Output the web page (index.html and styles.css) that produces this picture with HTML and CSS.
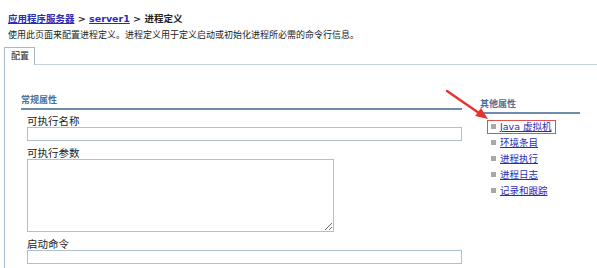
FILE: index.html
```html
<!DOCTYPE html>
<html lang="zh">
<head>
  <meta charset="UTF-8" />
  <title>进程定义</title>
  <link rel="stylesheet" href="styles.css">
</head>
<body>

  <div class="breadcrumb">
    <a href="#">应用程序服务器</a> &gt; <a href="#">server1</a> &gt; 进程定义
  </div>
  <div class="desc">使用此页面来配置进程定义。进程定义用于定义启动或初始化进程所必需的命令行信息。</div>

  <div class="tabs">
    <div class="tab">配置</div>
    <div class="tab-rest"></div>
  </div>

  <div class="panel">
    <div class="general">
      <h3 class="section-title">常规属性</h3>
      <div class="field">
        <label>可执行名称</label>
        <input type="text" class="text-input">
      </div>
      <div class="field">
        <label>可执行参数</label>
        <textarea class="text-area"></textarea>
      </div>
      <div class="field">
        <label>启动命令</label>
        <input type="text" class="text-input">
      </div>
    </div>

    <div class="other">
      <h3 class="section-title other-title">其他属性</h3>
      <ul class="links">
        <li class="highlight"><a href="#">Java 虚拟机</a></li>
        <li><a href="#">环境条目</a></li>
        <li><a href="#">进程执行</a></li>
        <li><a href="#">进程日志</a></li>
        <li><a href="#">记录和跟踪</a></li>
      </ul>
    </div>
  </div>

  <!-- red pointer arrow drawn over the page -->
  <svg class="arrow" width="52" height="38" viewBox="0 0 52 38">
    <path d="M7 5 L39 27" stroke="#e8322f" stroke-width="2.4" stroke-linecap="round" fill="none"/>
    <polygon points="48,33 35.2,30 41,22" fill="#e8322f"/>
  </svg>

</body>
</html>
```

FILE: styles.css
```css
body {
  position: relative;
  margin: 0;
  font-family: "DejaVu Sans", "Noto Sans CJK SC", sans-serif;
  font-size: 11px;
  color: #222;
  background: #fff;
  overflow: hidden;
}

a {
  color: #2b2bb8;
}

.breadcrumb {
  padding: 12px 0 0 8px;
  font-size: 9.5px;
  font-weight: bold;
  line-height: 14px;
  color: #222;
}

.breadcrumb a {
  color: #2b2bb8;
}

.desc {
  padding: 3px 0 0 8px;
  font-size: 9px;
  line-height: 12px;
  color: #222;
}

.tabs {
  display: flex;
  margin: 6px 0 0 4px;
}

.tab {
  border: 1px solid #a8b8cc;
  border-bottom: none;
  padding: 2px 5px 3px 6px;
  font-size: 9px;
  line-height: 12px;
  background: #fff;
}

.tab-rest {
  flex: 1;
  border-bottom: 1px solid #c4d0dc;
}

.panel {
  box-sizing: border-box;
  margin-left: 4px;
  border-left: 1px solid #a8b8cc;
  height: 204px;
  display: flex;
  padding: 28px 0 0 16px;
}

.general {
  width: 441px;
}

.section-title {
  margin: 0;
  font-size: 9px;
  font-weight: bold;
  color: #4b6f97;
  line-height: 14px;
  padding-bottom: 1px;
  border-bottom: 2px solid #6f8cab;
}

.field {
  padding-left: 6px;
}

.field label {
  display: block;
  font-size: 10.5px;
  line-height: 12px;
  padding-top: 5px;
  color: #222;
}

.field + .field label {
  padding-top: 6px;
}

.text-input {
  display: block;
  box-sizing: border-box;
  width: 435px;
  height: 14px;
  margin: 0;
  border: 1px solid #aebfcd;
  padding: 0;
}

.text-area {
  display: block;
  box-sizing: border-box;
  width: 307px;
  height: 73px;
  margin: 0;
  border: 1px solid #aebfcd;
  padding: 0;
  resize: both;
}

.other {
  margin-left: 18px;
  width: 100px;
  padding-top: 4px;
}

.links {
  list-style: none;
  margin: 6px 0 0;
  padding: 0 0 0 7px;
  font-size: 9.5px;
}

.links li {
  width: fit-content;
  line-height: 12px;
  margin-bottom: 2px;
  border: 1px solid transparent;
  padding-right: 3px;
}

.links li::before {
  content: "";
  display: inline-block;
  width: 5px;
  height: 5px;
  background: #a8a8a8;
  margin: 0 4px 1px 3px;
}

.links .highlight {
  border-color: #e05050;
}

.arrow {
  position: absolute;
  left: 440px;
  top: 86px;
}
```
